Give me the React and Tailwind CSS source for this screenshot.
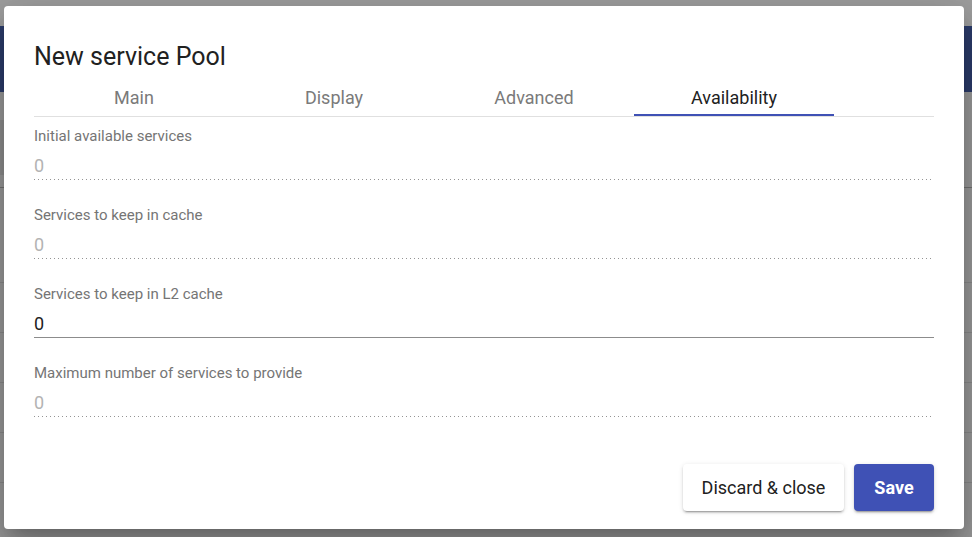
import React from 'react';

const TABS = ['Main', 'Display', 'Advanced', 'Availability'];

const FIELDS = [
  { label: 'Initial available services', value: '0', disabled: true },
  { label: 'Services to keep in cache', value: '0', disabled: true },
  { label: 'Services to keep in L2 cache', value: '0', disabled: false },
  { label: 'Maximum number of services to provide', value: '0', disabled: true },
];

const Field = ({ label, value, disabled }) => (
  <div className="mb-[25px]">
    <div className="text-[15px] leading-[20px] text-[#757575]">{label}</div>
    <div className={`mt-[8px] text-[18px] leading-[24px] ${disabled ? 'text-[#b3b3b3]' : 'text-[#212121]'}`}>{value}</div>
    <div
      className={`mt-[1px] h-px ${
        disabled
          ? 'bg-[linear-gradient(to_right,rgba(0,0,0,0.42)_0%,rgba(0,0,0,0.42)_33%,transparent_0%)] bg-[length:4px_1px] bg-repeat-x'
          : 'bg-[#8c8c8c]'
      }`}
    />
  </div>
);

export default function App() {
  return (
    <div className="relative w-[972px] h-[537px] overflow-hidden bg-[#9a9a9a] font-['Roboto','Liberation_Sans',sans-serif]">
      {/* dimmed app behind the dialog */}
      <div className="h-[26px] bg-[#9e9e9e]" />
      <div className="h-[66px] bg-[#2c3c6b]" />
      <div className="h-[28px]" />
      <div className="h-[55px] w-[40px] bg-[#8e8e8e]" />
      <div className="h-[12px]" />
      <div className="border-t border-[#727272]" />
      <div className="h-[94px]" />
      {[0, 1, 2, 3, 4].map(i => (
        <div key={i} className="h-[50px] border-t border-[#8a8a8a]" />
      ))}

      {/* dialog overlay */}
      <div className="absolute left-[4px] top-[6px] w-[960px] h-[523px] rounded-[4px] bg-white shadow-[0_11px_15px_-7px_rgba(0,0,0,0.2),0_24px_38px_3px_rgba(0,0,0,0.14),0_9px_46px_8px_rgba(0,0,0,0.12)] px-[30px] pt-[35px] flex flex-col">
        <h2 className="text-[25px] leading-[32px] font-normal text-[#212121]">New service Pool</h2>

        <div className="mt-[7px] flex border-b border-[#e0e0e0]">
          {TABS.map((t, i) => (
            <div
              key={t}
              className={`w-[200px] h-[36px] flex items-center justify-center text-[18px] ${
                i === 3 ? 'text-[#212121] border-b-2 border-[#3f51b5]' : 'text-[#7a7a7a] border-b-2 border-transparent'
              }`}
            >
              {t}
            </div>
          ))}
        </div>

        <div className="mt-[9px]">
          {FIELDS.map(f => (
            <Field key={f.label} {...f} />
          ))}
        </div>

        <div className="mt-[22px] flex justify-end gap-[10px]">
          <button className="h-[47px] w-[161px] rounded-[4px] bg-white text-[18px] text-[#212121] shadow-[0_3px_1px_-2px_rgba(0,0,0,0.2),0_2px_2px_0_rgba(0,0,0,0.14),0_1px_5px_0_rgba(0,0,0,0.12)]">
            Discard &amp; close
          </button>
          <button className="h-[47px] w-[80px] rounded-[4px] bg-[#3f51b5] text-[18px] font-bold text-white shadow-[0_3px_1px_-2px_rgba(0,0,0,0.2),0_2px_2px_0_rgba(0,0,0,0.14),0_1px_5px_0_rgba(0,0,0,0.12)]">
            Save
          </button>
        </div>
      </div>
    </div>
  );
}
